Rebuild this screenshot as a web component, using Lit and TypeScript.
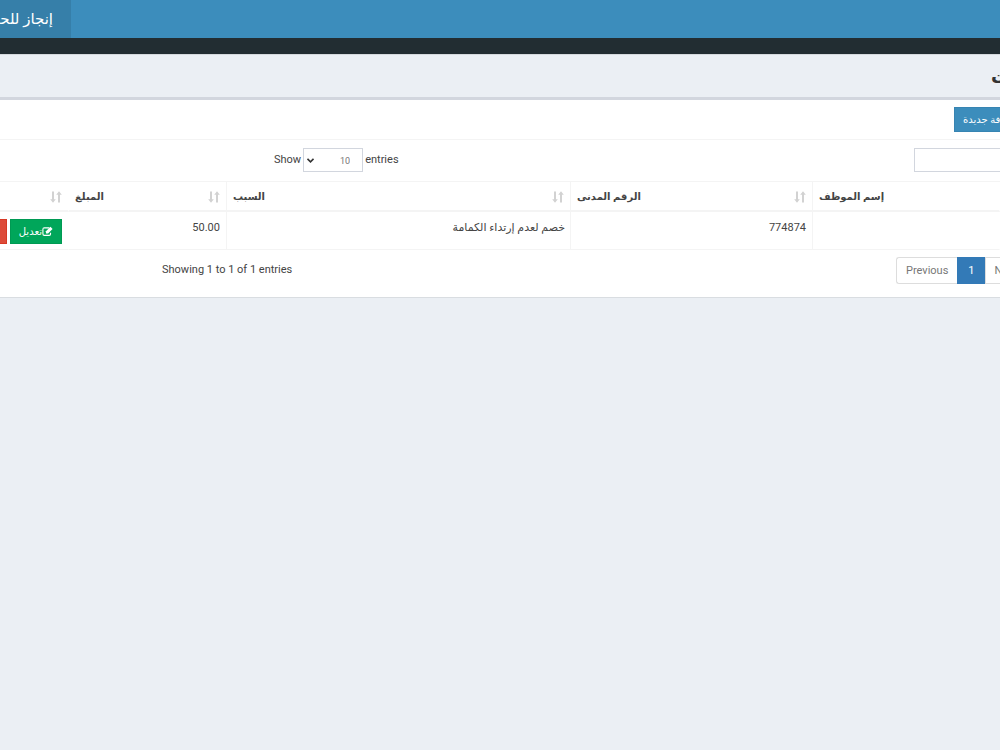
import { LitElement, html, css, svg } from "lit";
import { customElement } from "lit/decorators.js";

interface Column {
  title: string;
  width: string;
}

const columns: Column[] = [
  { title: "", width: "6.9%" },
  { title: "المبلغ", width: "15.8%" },
  { title: "السبب", width: "34.4%" },
  { title: "الرقم المدنى", width: "24.2%" },
];

const sortIcon = html`<svg class="sort" viewBox="0 0 12 12" aria-hidden="true">
  ${svg`<path d="M2 0.5h2v7.7H5.8L3 11.8 0.2 8.2H2z M8 11.5h2v-7.7h1.8L9 0.2 6.2 3.8H8z" />`}
</svg>`;

const editIcon = html`<svg class="edit" viewBox="0 0 12 12" aria-hidden="true">
  ${svg`<path d="M8 2H2.5Q1 2 1 3.5v5.2Q1 10.2 2.5 10.2h5.3Q9.3 10.2 9.3 8.7V7.4" fill="none" stroke="currentColor" stroke-width="1.2" />
  <path d="M4.3 8.1V5.8l4.9-4.9 2.3 2.3-4.9 4.9z" fill="currentColor" />`}
</svg>`;

@customElement("app-root")
export class AppRoot extends LitElement {
  static styles = css`
    :host {
      display: block;
      min-height: 100vh;
      overflow: hidden;
      background: #ebeff4;
      color: #444;
      font: 11px/18px Roboto, "DejaVu Sans", sans-serif;
    }
    * {
      box-sizing: border-box;
    }
    .top {
      height: 38px;
      background: #3c8dbc;
    }
    .logo {
      display: block;
      width: 71px;
      height: 38px;
      padding-right: 18px;
      overflow: hidden;
      background: #367fa9;
      color: #fff;
      font-size: 15px;
      line-height: 38px;
      white-space: nowrap;
      text-decoration: none;
    }
    .strip {
      height: 16px;
      background: #222d32;
    }
    .heading {
      height: 43px;
      border-top: 1px solid #d5d9dd;
      display: grid;
      grid-template-columns: 1fr 9px;
    }
    h1 {
      grid-column: 2;
      margin: 0;
      color: #333;
      font-size: 18px;
      font-weight: 700;
      line-height: 44px;
      white-space: nowrap;
      direction: ltr;
    }
    .box {
      border-top: 3px solid #d2d6de;
      border-bottom: 1px solid #d9dde1;
      background: #fff;
    }
    .actions {
      display: grid;
      grid-template-columns: 1fr 46px;
      padding-top: 7px;
      height: 40px;
      border-bottom: 1px solid #f4f4f4;
    }
    button {
      border: 1px solid;
      height: 25px;
      padding: 0 8px;
      color: #fff;
      font: 10px/18px Roboto, "DejaVu Sans", sans-serif;
      white-space: nowrap;
    }
    .add {
      grid-column: 2;
      justify-self: start;
      background: #3c8dbc;
      border-color: #3784b2;
    }
    .tools {
      display: grid;
      grid-template-columns: 27.4% 1fr 86px;
      align-items: start;
      height: 41px;
      padding-top: 8px;
    }
    .length {
      grid-column: 2;
      display: flex;
      align-items: center;
      gap: 2px;
    }
    .pick {
      position: relative;
      display: flex;
    }
    select {
      appearance: none;
      width: 60px;
      height: 24px;
      padding: 2px 12px 0;
      border: 1px solid #d2d6de;
      border-radius: 0;
      background: #fff;
      color: #777;
      font: 9px/18px Roboto, sans-serif;
    }
    .chevron {
      position: absolute;
      left: 4px;
      top: 9px;
      width: 7px;
      height: 7px;
      pointer-events: none;
    }
    .search {
      width: 160px;
      height: 24px;
      border: 1px solid #d2d6de;
      background: #fff;
    }
    table {
      width: 100%;
      table-layout: fixed;
      border-collapse: separate;
      border-spacing: 0;
      border-top: 1px solid #f4f4f4;
    }
    th,
    td {
      padding: 7px 6px 5px;
      border-right: 1px solid #f4f4f4;
      white-space: nowrap;
      vertical-align: top;
    }
    th:first-child,
    td:first-child,
    th:last-child,
    td:last-child {
      border-right-color: transparent;
    }
    th {
      height: 30px;
      padding: 6px 6px 4px;
      border-bottom: 2px solid #f4f4f4;
      font-size: 10px;
      font-weight: 700;
    }
    td {
      height: 38px;
      border-bottom: 1px solid #f4f4f4;
      text-align: right;
    }
    .head {
      display: flex;
      align-items: center;
      justify-content: space-between;
      min-height: 18px;
    }
    .sort {
      width: 12px;
      height: 12px;
      fill: #d2d2d2;
    }
    .row-buttons {
      display: flex;
      justify-content: flex-end;
      gap: 3px;
    }
    .edit-button {
      display: flex;
      flex: none;
      align-items: center;
      background: #00a65a;
      border-color: #009a53;
    }
    .edit {
      width: 11px;
      height: 11px;
    }
    .delete-button {
      flex: none;
      background: #dd4b39;
      border-color: #d73925;
    }
    .foot {
      display: grid;
      grid-template-columns: 16.2% 1fr 104px;
      padding: 7px 0 13px;
    }
    .info {
      grid-column: 2;
      line-height: 26px;
    }
    .pages {
      display: flex;
    }
    .pages a {
      flex: none;
      height: 27px;
      padding: 4px 9px;
      border: 1px solid #ddd;
      border-right: 0;
      background: #fff;
      color: #777;
      text-decoration: none;
    }
    .pages a:first-child {
      border-radius: 3px 0 0 3px;
    }
    .pages a.current {
      padding: 4px 10px;
      border-color: #337ab7;
      background: #337ab7;
      color: #fff;
    }
  `;

  render() {
    return html`
      <header class="top"><a class="logo" href="#" dir="rtl">إنجاز للحلول</a></header>
      <div class="strip"></div>
      <main>
        <div class="heading"><h1>الخصومات</h1></div>
        <section class="box">
          <div class="actions"><button class="add">إضافة جديدة</button></div>
          <div class="tools">
            <div class="length">
              <label for="length">Show</label>
              <span class="pick">
                <select id="length" dir="rtl"><option>10</option><option>25</option></select>
                <svg class="chevron" viewBox="0 0 7 7" aria-hidden="true">
                  <path d="M0.5 1.8 3.5 4.8 6.5 1.8" fill="none" stroke="#333" stroke-width="1.6" />
                </svg>
              </span>
              <label for="length">entries</label>
            </div>
            <input class="search" type="search" aria-label="Search" />
          </div>
          <table>
            <colgroup>
              ${columns.map((c) => html`<col style="width:${c.width}" />`)}
              <col />
            </colgroup>
            <thead>
              <tr>
                ${columns.map((c) => html`<th><div class="head"><span>${c.title}</span>${sortIcon}</div></th>`)}
                <th><div class="head"><span>إسم الموظف</span></div></th>
              </tr>
            </thead>
            <tbody>
              <tr>
                <td>
                  <div class="row-buttons">
                    <button class="delete-button">حذف</button>
                    <button class="edit-button" dir="rtl">${editIcon}<span>تعديل</span></button>
                  </div>
                </td>
                <td>50.00</td>
                <td dir="rtl">خصم لعدم إرتداء الكمامة</td>
                <td>774874</td>
                <td></td>
              </tr>
            </tbody>
          </table>
          <div class="foot">
            <div class="info">Showing 1 to 1 of 1 entries</div>
            <nav class="pages" aria-label="Pages">
              <a href="#">Previous</a><a class="current" href="#">1</a><a href="#">Next</a>
            </nav>
          </div>
        </section>
      </main>
    `;
  }
}
